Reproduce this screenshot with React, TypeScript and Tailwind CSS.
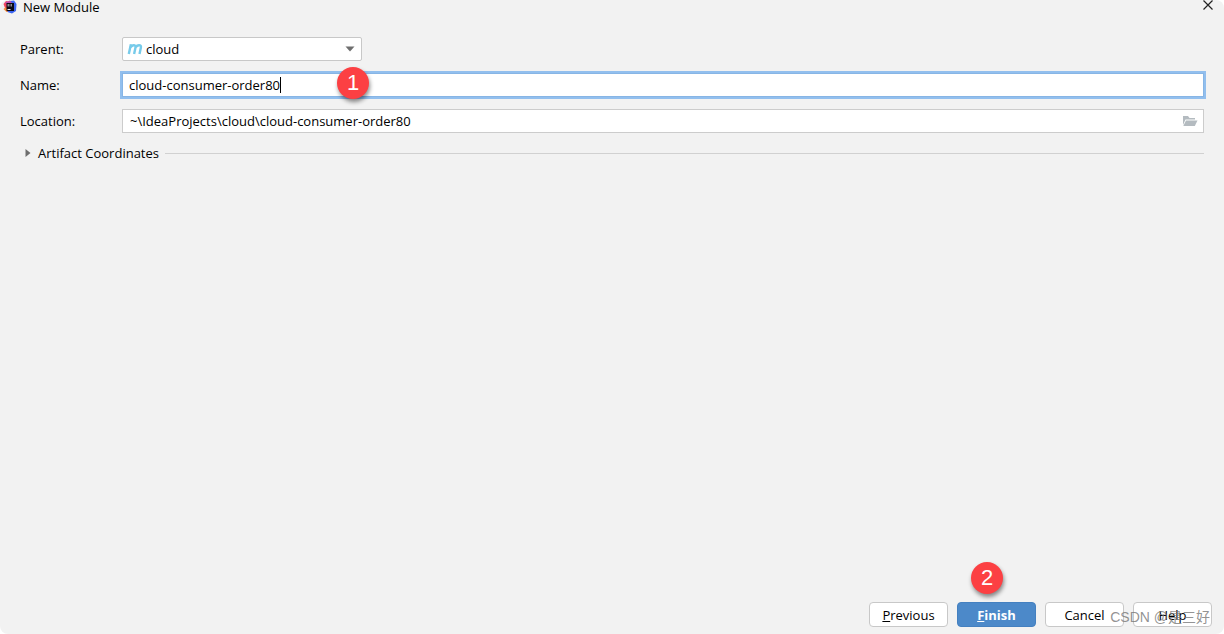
import { useState } from "react";
import type { ReactNode } from "react";

function IdeaLogo() {
  return (
    <svg viewBox="0 0 14 14" className="h-3.5 w-3.5" aria-hidden="true">
      <path d="M0.5 4 3 1l5 1-2 10-3-1.5Z" fill="#f5465f" />
      <path d="M0.5 9 3 7l3 5-2.500 0Z" fill="#f98b3c" />
      <path d="M7 1 11 0.500 13.500 4 13 11 9 13.500 4.500 12Z" fill="#3c64f0" />
      <path d="M2 2.500 7 0.500 9 3 3 4Z" fill="#c050b0" />
      <path d="M3.500 3h7.500v8H3.500Z" fill="#0c0a14" />
      <path d="M4.500 4h2v2.500h-2ZM7.500 4h1.500v2.500H7.500Z" fill="#8c8c96" />
      <path d="M4.500 9h3v1h-3Z" fill="#e8e8ee" />
    </svg>
  );
}

function MavenIcon() {
  return (
    <svg viewBox="0 0 16 12" className="h-3 w-4" fill="none" stroke="#77cbea" strokeWidth="2.4" aria-hidden="true">
      <path d="M1.800 11 3.900 1.200" />
      <path d="M3.500 4.200C4.600 2.700 5.600 2.200 6.700 2.200 8.200 2.200 8.800 3.100 8.500 4.600L7.100 11" />
      <path d="M8.600 4.200C9.700 2.700 10.800 2.200 12 2.200 13.600 2.200 14.200 3.100 13.900 4.600L12.500 11" />
    </svg>
  );
}

function FolderIcon() {
  return (
    <svg viewBox="0 0 16 12" className="h-3 w-4" fill="#b4bbc0" aria-hidden="true">
      <path d="M1 10V1h5l1.500 2H13v1.500H3.500Z" />
      <path d="M4 5.500h11.500L12.800 11H1.300Z" />
    </svg>
  );
}

function FormRow({ id, label, children }: { id: string; label: string; children: ReactNode }) {
  return (
    <div className="flex h-9 items-center">
      <label htmlFor={id} className="w-[102px] shrink-0">
        {label}
      </label>
      {children}
    </div>
  );
}

/** Numbered marker laid over the dialog */
function StepBadge({ step, className }: { step: number; className: string }) {
  return (
    <span
      className={`absolute flex h-8 w-8 items-center justify-center rounded-full bg-[#fc4043] font-['Liberation_Sans',sans-serif] text-[22px] leading-none text-white shadow-[1px_3px_4px_rgba(0,0,0,0.45)] ${className}`}
    >
      {step}
    </span>
  );
}

const BUTTON = "h-[25px] w-[79px] rounded border";
const PLAIN = `${BUTTON} border-[#c8c8c8] bg-white`;

export default function App() {
  const [name, setName] = useState("cloud-consumer-order80");
  const [location, setLocation] = useState("~\\IdeaProjects\\cloud\\cloud-consumer-order80");

  return (
    <div className="bg-white">
      <div className="relative flex min-h-screen flex-col rounded-lg bg-[#f2f2f2] font-['Open_Sans','Noto_Sans_CJK_SC',sans-serif] text-[13px] leading-4 text-black">
        <header className="flex h-[14px] items-center gap-1.5 pr-2.5 pl-[3px]">
          <IdeaLogo />
          <h1>New Module</h1>
          <button type="button" aria-label="Close" className="ml-auto">
            <svg viewBox="0 0 12 12" className="h-3 w-3 -translate-y-0.5" stroke="#222" strokeWidth="1.2" aria-hidden="true">
              <path d="M1.500 1.500 10.500 10.500M10.500 1.500 1.500 10.500" />
            </svg>
          </button>
        </header>

        <main className="flex-1 px-5 pt-[17px]">
          <FormRow id="parent" label="Parent:">
            <div className="relative w-60">
              <select
                id="parent"
                className="h-6 w-full appearance-none rounded-xs border border-[#c8c8c8] bg-white pr-6 pl-[23px] outline-none"
              >
                <option>cloud</option>
              </select>
              <span className="pointer-events-none absolute inset-y-0 left-[5px] flex items-center">
                <MavenIcon />
              </span>
              <span className="pointer-events-none absolute inset-y-0 right-[7px] flex items-center">
                <svg viewBox="0 0 10 6" className="h-1.5 w-2.5" fill="#6e6e6e" aria-hidden="true">
                  <path d="M0.500 0.500h9L5 5.500Z" />
                </svg>
              </span>
            </div>
          </FormRow>

          <FormRow id="name" label="Name:">
            <div className="relative flex-1">
              <input
                id="name"
                value={name}
                onChange={(e) => setName(e.target.value)}
                className="block h-6 w-full border border-[#87b5e5] bg-white px-1.5 ring-2 ring-[#92bfee] outline-none"
              />
              <span className="absolute top-1 left-[158px] h-4 w-px bg-black" />
              <StepBadge step={1} className="-top-1.5 left-[215px]" />
            </div>
          </FormRow>

          <FormRow id="location" label="Location:">
            <div className="relative flex-1">
              <input
                id="location"
                value={location}
                onChange={(e) => setLocation(e.target.value)}
                className="block h-6 w-full border border-[#cccccc] bg-white pr-7 pl-[7px] outline-none"
              />
              <button type="button" aria-label="Browse" className="absolute inset-y-0 right-1.5 flex items-center">
                <FolderIcon />
              </button>
            </div>
          </FormRow>

          <div className="flex h-7 items-center">
            <button type="button" aria-expanded="false" className="flex items-center gap-[7px] pl-[5px]">
              <svg viewBox="0 0 6 8" className="h-2 w-1.5" fill="#6e6e6e" aria-hidden="true">
                <path d="M0.500 0 5.500 4 0.500 8Z" />
              </svg>
              Artifact Coordinates
            </button>
            <span className="ml-1.5 h-px flex-1 bg-[#d1d1d1]" />
          </div>
        </main>

        <footer className="relative flex justify-end gap-[9px] pr-3 pb-[7px]">
          <button type="button" className={PLAIN}>
            <u>P</u>revious
          </button>
          <div className="relative">
            <button type="button" className={`${BUTTON} border-[#4480c0] bg-[#4c89c9] font-bold text-white`}>
              <u>F</u>inish
            </button>
            <StepBadge step={2} className="-top-10 left-3.5" />
          </div>
          <button type="button" className={PLAIN}>
            Cancel
          </button>
          <button type="button" className={PLAIN}>
            Help
          </button>
          <span className="pointer-events-none absolute right-3.5 bottom-[7px] font-['Liberation_Sans','Noto_Sans_CJK_SC',sans-serif] text-[14px] leading-5 text-[#777777]/80">
            CSDN @是三好
          </span>
        </footer>
      </div>
    </div>
  );
}
